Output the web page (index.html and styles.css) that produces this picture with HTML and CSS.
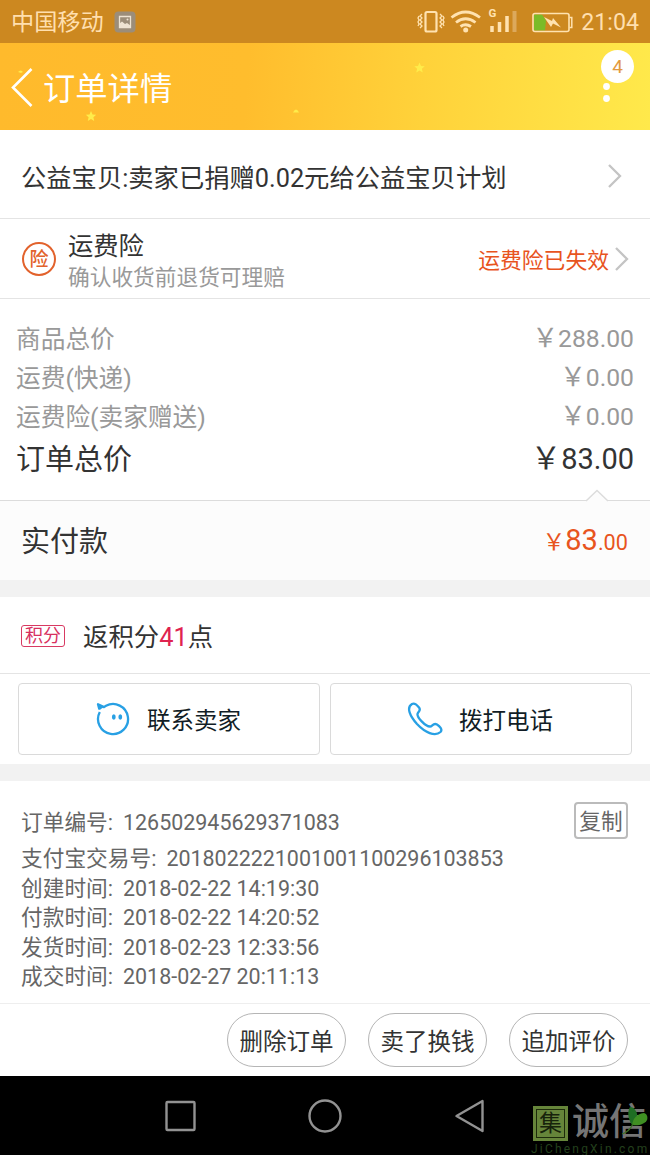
FILE: index.html
```html
<!DOCTYPE html>
<html lang="zh-CN">
<head>
<meta charset="utf-8">
<title>订单详情</title>
<link rel="stylesheet" href="styles.css">
</head>
<body>
<div class="status">
  <span class="carrier">中国移动</span>
  <svg class="pic" width="22" height="22" viewBox="0 0 22 22"><rect x=".5" y=".5" width="21" height="21" rx="4" fill="#9b8d79"/><path d="M5.500 5.500h11v11h-11z" fill="none" stroke="#eee3d2" stroke-width="1.300"/><path d="M5.500 12.500l2.500-2 3 2.500 2-1 3.500 2.500v2h-11z" fill="#eee3d2"/><circle cx="13.500" cy="8.500" r="1" fill="#eee3d2"/></svg>
  <svg class="sysicons" width="160" height="43" viewBox="0 0 160 43" fill="none" stroke="#ffe2b0">
    <rect x="9.500" y="12" width="11" height="19.500" rx="1.500" stroke-width="2.200"/>
    <path d="M6 14l-2 2 2 2-2 2 2 2-2 2 2 2-2 2M3 16l-1 2 1 2-1 2 1 2-1 2M24 14l2 2-2 2 2 2-2 2 2 2-2 2 2 2M27 16l1 2-1 2 1 2-1 2 1 2" stroke-width="1.300"/>
    <path d="M35.500 17.500q14-11 28.500 0M40 22.500q9.500-7.500 19.500 0M44.500 26.500q5-3.500 10.500 0" stroke-width="2.800"/>
    <circle cx="49.700" cy="30" r="2.500" fill="#ffe2b0" stroke="none"/>
    <path d="M76 32v-6M83.500 32V22M91 32V16" stroke-width="3.500"/><path d="M98.500 32V11" stroke="#dca95c" stroke-width="4"/>
    <path d="M118 14.500h8l4 6-1 10h-11z" fill="#7bbb28" stroke="none"/>
    <rect x="117" y="13.500" width="36" height="18" rx="2" stroke-width="1.600"/><path d="M153.500 17.500h2.300v10h-2.300" stroke-width="1.500"/>
    <path d="M128 17l8 4 1-3 8 9.500-8-4-2 3.500z" fill="#ffe2b0" stroke="none"/>
    <text x="72.500" y="17" class="net">G</text>
  </svg>
  <span class="clock">21:04</span>
</div>
<header class="head">
  <svg class="back" width="22" height="40" viewBox="0 0 22 40"><path d="M20.500 2L2 20.500 20.500 39" fill="none" stroke="#fff" stroke-width="2.600"/></svg>
  <h1>订单详情</h1>
  <svg class="stars" width="650" height="87" viewBox="0 0 650 87"><g fill="#ffec4a"><path id="s" d="M91 68l1.500 3.500 3.700.3-2.800 2.500.8 3.700-3.200-2-3.200 2 .8-3.700-2.800-2.500 3.700-.3z"/><use href="#s" x="328.500" y="-48.500"/><path d="M293 69.500q3-6 6 0z"/><path d="M18 29q3-3 5 0l-2 1z"/></g><g fill="#fff"><circle cx="606.500" cy="43.500" r="3.400"/><circle cx="606.500" cy="55.500" r="3.400"/></g></svg>
  <span class="badge">4</span>
</header>
<section class="row donate"><span>公益宝贝:卖家已捐赠0.02元给公益宝贝计划</span>
  <svg class="chev" width="16" height="26" viewBox="0 0 16 26"><path d="M2 2l11 11L2 24" fill="none" stroke="#c4c4c4" stroke-width="2.300"/></svg>
</section>
<section class="row insure">
  <span class="seal">险</span>
  <div class="insure-text"><div class="t1">运费险</div><div class="t2">确认收货前退货可理赔</div></div>
  <span class="expired">运费险已失效</span>
  <svg width="16" height="26" viewBox="0 0 16 26"><path d="M2 2l11 11L2 24" fill="none" stroke="#c4c4c4" stroke-width="2.300"/></svg>
</section>
<section class="totals">
  <div class="line"><span>商品总价</span><span><i>￥</i>288.00</span></div>
  <div class="line"><span>运费(快递)</span><span><i>￥</i>0.00</span></div>
  <div class="line"><span>运费险(卖家赠送)</span><span><i>￥</i>0.00</span></div>
  <div class="line sum"><span>订单总价</span><span><i>￥</i>83.00</span></div>
</section>
<section class="paid"><span>实付款</span><span class="price"><i>￥</i><b>83</b>.00</span>
  <svg class="notch" width="24" height="13" viewBox="0 0 24 13"><path d="M1 12L12 1.500 23 12v1H1z" fill="#fcfcfc"/><path d="M1 12L12 1.500 23 12" fill="none" stroke="#dcdcdc" stroke-width="1.500"/></svg>
</section>
<div class="gap"></div>
<section class="points"><span class="tag">积分</span><span>返积分<em>41</em>点</span></section>
<section class="contacts">
  <div class="btn"><svg width="36" height="36" viewBox="0 0 36 36" fill="none" stroke="#28a0e4" stroke-width="2.300" stroke-linejoin="round"><path d="M4.800 11A15 15 0 1 0 11 4.800L9 6.100 3 3.200 4.400 8.500"/><path d="M3 3l6 3-4.500 3z" fill="#28a0e4" stroke="none"/><ellipse cx="18.800" cy="16" rx="1.900" ry="2.700" fill="#28a0e4" stroke="none"/><ellipse cx="25.300" cy="16" rx="1.900" ry="2.700" fill="#28a0e4" stroke="none"/></svg><span>联系卖家</span></div>
  <div class="btn"><svg width="36" height="36" viewBox="0 0 36 36" fill="none" stroke="#28a0e4" stroke-width="2.300" stroke-linejoin="round"><path d="M5 3C8 1.500 10 4 12 6.500C14.500 9.500 11 10.500 10.500 13C10 16 18 25.500 23 25.500C25.500 25.500 26 21.500 30 23.500C32.500 25 36 28.500 33.500 31C28 36 18 31.500 10 23C3 15 -1 6.500 5 3Z"/></svg><span>拨打电话</span></div>
</section>
<div class="gap"></div>
<section class="order">
  <div class="info first"><span>订单编号:</span><span class="val">126502945629371083</span><span class="copy">复制</span></div>
  <div class="info"><span>支付宝交易号:</span><span class="val">2018022221001001100296103853</span></div>
  <div class="info"><span>创建时间:</span><span class="val">2018-02-22 14:19:30</span></div>
  <div class="info"><span>付款时间:</span><span class="val">2018-02-22 14:20:52</span></div>
  <div class="info"><span>发货时间:</span><span class="val">2018-02-23 12:33:56</span></div>
  <div class="info"><span>成交时间:</span><span class="val">2018-02-27 20:11:13</span></div>
</section>
<section class="actions"><span>删除订单</span><span>卖了换钱</span><span>追加评价</span></section>
<nav class="nav">
  <svg width="650" height="79" viewBox="0 0 650 79" fill="none" stroke="#929292" stroke-width="2.400"><rect x="166.500" y="26" width="28" height="28" rx="1"/><circle cx="325" cy="40" r="15.500"/><path d="M482.500 25v30L456.500 40z" stroke-linejoin="round"/></svg>
  <div class="mark"><div class="mark-top"><span class="ji">集</span><span class="cx">诚信</span></div><div class="url">JiChengXin.com</div>
  <svg class="leaf" width="28" height="32" viewBox="0 0 28 32"><path d="M11 20C7 14 6 7 9 2c4 0 8 5 7 10z" fill="#1f6e24"/><path d="M11 20C12 14 15 9 23 8c3 1 4 4 3 7-2 4-8 6-15 5z" fill="#3f8f22"/><path d="M12 19Q8 27 1 29" fill="none" stroke="#3c6f26" stroke-width="1.300"/></svg></div>
</nav>
</body>
</html>
```
FILE: styles.css
```css
* { box-sizing: border-box; }
body { margin: 0; width: 650px; height: 1155px; overflow: hidden; background: #fff; color: #333; font-family: Roboto, "Noto Sans CJK SC", sans-serif; line-height: 1; white-space: nowrap; }
svg { display: block; flex: none; }
i { font-style: normal; font-size: 1.05em; line-height: 1; margin-left: -2px; }
.status { height: 43px; background: #cc8820; display: flex; align-items: center; padding: 0 11px 0 11px; color: #ffdfae; font-size: 23.200px; }
.carrier { padding-top: 2px; }
.clock { padding-top: 3px; }
.pic { margin-left: 10px; }
.sysicons { margin-left: auto; margin-right: 5px; }
.net { font: 700 11.500px Roboto, sans-serif; fill: #ffe2b0; stroke: none; }
.head { position: relative; height: 87px; display: flex; align-items: center; padding-left: 11px; background: linear-gradient(94deg, #ffba2c 0%, #ffbd2d 38%, #ffd23a 65%, #ffe94b 100%); color: #fff; }
.head h1 { margin: 5px 0 0 10px; font-size: 32.300px; font-weight: 400; }
.stars { position: absolute; left: 0; top: 0; }
.badge { position: absolute; left: 601px; top: 7px; width: 33px; height: 33px; border-radius: 50%; background: #fff; color: #e39a3e; font-size: 19px; line-height: 34px; text-align: center; }
.row { display: flex; align-items: center; border-bottom: 1px solid #e4e4e4; }
.donate { height: 89px; padding: 9px 27px 0 21px; justify-content: space-between; font-size: 25.300px; }
.chev { margin-top: -5px; }
.insure { height: 80px; padding: 0 20px 0 22px; }
.seal { width: 34px; height: 34px; border: 2px solid #e2622c; border-radius: 50%; color: #e2622c; font-size: 19px; font-weight: 500; line-height: 31px; text-align: center; }
.insure-text { margin-left: 12px; padding-top: 6px; }
.t1 { font-size: 25.300px; line-height: 32px; }
.t2 { font-size: 21.700px; line-height: 30px; color: #999; }
.expired { margin-left: auto; margin-right: 5px; padding-top: 4px; font-size: 21.800px; color: #e8541e; }
.totals { height: 201px; padding: 20px 16px 0; }
.line { display: flex; justify-content: space-between; height: 39px; line-height: 41px; font-size: 24.700px; color: #999; }
.line span:last-child { line-height: 40px; }
.sum { height: 46px; line-height: 49px; font-size: 29px; color: #333; }
.sum span:last-child { line-height: 47px; }
.paid { position: relative; height: 80px; border-top: 1px solid #dcdcdc; background: #fcfcfc; display: flex; align-items: center; justify-content: space-between; padding: 4px 22px 0 21px; font-size: 29px; }
.price { margin-top: -5px; color: #e8541e; font-size: 21.700px; }
.price b { font-weight: 400; font-size: 29px; }
.notch { position: absolute; left: 585px; top: -12px; }
.gap { height: 17px; background: #f2f2f2; }
.points { height: 77px; border-bottom: 1px solid #e4e4e4; display: flex; align-items: center; gap: 17px; padding: 5px 21px 0; font-size: 25.400px; }
.points em { font-style: normal; color: #df2350; }
.tag { width: 44px; height: 22px; margin: -4px 1px 0 0; border: 1px solid #d83a62; border-radius: 3px; color: #d83060; font-size: 18px; line-height: 20px; text-align: center; }
.contacts { height: 90px; padding: 9px 18px; display: flex; gap: 10px; }
.btn { flex: 1; height: 72px; border: 1px solid #dadada; border-radius: 4px; display: flex; align-items: center; justify-content: center; gap: 16px; padding-right: 2px; color: #111d26; font-size: 23.500px; }
.btn span { padding-top: 6px; }
.order { height: 223px; padding: 20px 22px 0 21px; border-bottom: 1px solid #eee; color: #666; font-size: 21.700px; }
.info { display: flex; align-items: center; gap: 10px; height: 29.500px; padding-top: 3px; }
.val { font-size: 21.450px; margin-top: -1px; }
.first { height: 42px; padding-top: 2px; }
.copy { margin: -6px 0 0 auto; width: 54px; height: 37px; border: 2px solid #bbb; border-radius: 4px; line-height: 35px; text-align: center; }
.actions { height: 72px; padding: 9px 22px 0; display: flex; justify-content: flex-end; gap: 22px; }
.actions span { width: 119px; height: 54px; border: 1px solid #b5b5b5; border-radius: 27px; text-align: center; font-size: 23.500px; line-height: 56px; }
.nav { position: relative; height: 79px; background: #000; }
.mark { position: absolute; left: 531px; top: 29px; width: 122px; }
.mark-top { display: flex; align-items: center; gap: 4px; height: 36px; }
.ji { width: 35px; height: 35px; margin-left: 2px; border: 2px solid #66853a; outline: 1px solid #1d2b0b; outline-offset: -4px; background: #66853a; color: #17230b; font-size: 23px; line-height: 32px; text-align: center; }
.cx { color: #757575; font-size: 37px; font-weight: 500; line-height: 36px; }
.url { margin-top: 2px; color: #24411d; font: 12px/12px Roboto, sans-serif; letter-spacing: 2.200px; }
.leaf { position: absolute; left: 90px; top: 0; }
```
